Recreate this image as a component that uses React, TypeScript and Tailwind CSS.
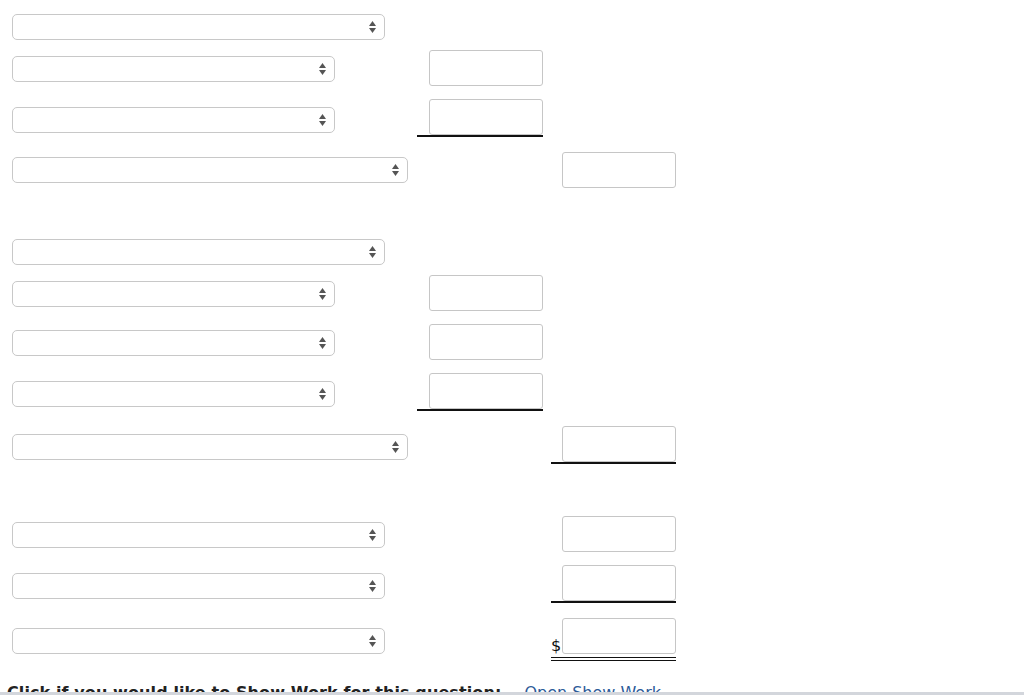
type Line = "none" | "single" | "double";

type Row = {
  rowClass: string;
  selectClass: string;
  col?: 1 | 2;
  line?: Line;
  dollar?: boolean;
};

// spacing between entry rows is uneven on purpose, groups are separated by larger gaps
const rows: Row[] = [
  { rowClass: "mt-[14px] h-[26px]", selectClass: "w-[373px]" },
  { rowClass: "mt-[10px] h-[36px]", selectClass: "mt-[6px] w-[323px]", col: 1 },
  { rowClass: "mt-[13px] h-[38px]", selectClass: "mt-[8px] w-[323px]", col: 1, line: "single" },
  { rowClass: "mt-[15px] h-[36px]", selectClass: "mt-[5px] w-[396px]", col: 2 },
  { rowClass: "mt-[51px] h-[26px]", selectClass: "w-[373px]" },
  { rowClass: "mt-[10px] h-[36px]", selectClass: "mt-[6px] w-[323px]", col: 1 },
  { rowClass: "mt-[13px] h-[36px]", selectClass: "mt-[6px] w-[323px]", col: 1 },
  { rowClass: "mt-[13px] h-[38px]", selectClass: "mt-[8px] w-[323px]", col: 1, line: "single" },
  { rowClass: "mt-[15px] h-[38px]", selectClass: "mt-[8px] w-[396px]", col: 2, line: "single" },
  { rowClass: "mt-[52px] h-[36px]", selectClass: "mt-[6px] w-[373px]", col: 2 },
  { rowClass: "mt-[13px] h-[38px]", selectClass: "mt-[8px] w-[373px]", col: 2, line: "single" },
  { rowClass: "mt-[15px] h-[43px]", selectClass: "mt-[10px] w-[373px]", col: 2, line: "double", dollar: true },
];

function UpDown() {
  return (
    <svg width="7" height="12" viewBox="0 0 7 12" className="shrink-0">
      <polygon points="3.5,0 7,5 0,5" fill="#555" />
      <polygon points="0,7 7,7 3.5,12" fill="#555" />
    </svg>
  );
}

function Select({ className }: { className: string }) {
  return (
    <div
      className={`${className} h-[26px] rounded-[5px] border border-[#c8c8c8] bg-white flex items-center justify-end pr-[8px]`}
    >
      <UpDown />
    </div>
  );
}

function Input() {
  return <div className="w-[114px] h-[36px] rounded-[3px] border border-[#c6c6c6] bg-white" />;
}

function Cell({ line, dollar }: { line?: Line; dollar?: boolean }) {
  const lineClass =
    line === "single"
      ? "border-b-2 border-[#111]"
      : line === "double"
        ? "border-b-[4px] border-double border-[#111] pb-[3px]"
        : "";
  return (
    <div className={`flex items-end justify-end ${lineClass}`}>
      {dollar && (
        <span className="mr-[1px] text-[16px] leading-none text-[#111] font-['DejaVu_Sans',sans-serif]">$</span>
      )}
      <Input />
    </div>
  );
}

export default function App() {
  return (
    <div className="relative h-[695px] overflow-hidden bg-white font-['DejaVu_Sans','Liberation_Sans',sans-serif]">
      {rows.map((r, i) => (
        <div key={i} className={`flex items-start ${r.rowClass}`}>
          <div className="w-[417px] shrink-0 pl-3">
            <Select className={r.selectClass} />
          </div>
          <div className="w-[126px] shrink-0">{r.col === 1 && <Cell line={r.line} />}</div>
          <div className="w-[125px] shrink-0 ml-[8px]">
            {r.col === 2 && <Cell line={r.line} dollar={r.dollar} />}
          </div>
        </div>
      ))}

      <div className="mt-[22px] pl-[7px] flex items-baseline gap-[23px] leading-5">
        <span className="text-[16px] font-bold tracking-[0.1px] text-[#222]">
          Click if you would like to Show Work for this question:
        </span>
        <a className="text-[16px] text-[#2c5a98]">Open Show Work</a>
      </div>

      <div className="absolute left-0 right-0 bottom-0 h-[3px] bg-[#d3d6dc]" />
    </div>
  );
}
